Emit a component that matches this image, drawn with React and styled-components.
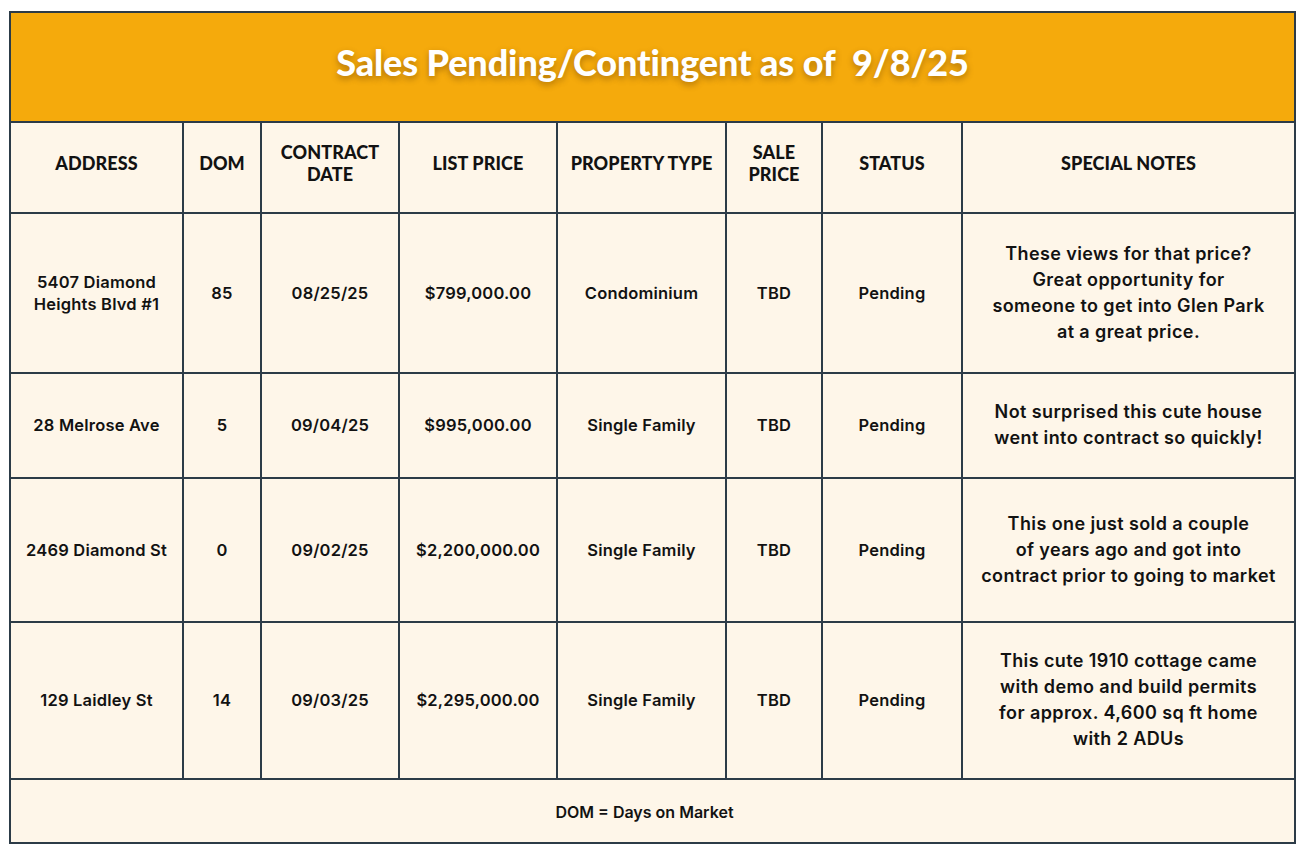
import React from "react";
import styled, { createGlobalStyle } from "styled-components";

const Global = createGlobalStyle`
  html, body { margin: 0; padding: 0; background: #ffffff; }
  body { font-family: "Lato", "Liberation Sans", sans-serif; }
`;

const Page = styled.div`
  padding: 11px 0 0 9px;
`;

const Sheet = styled.div`
  width: 1287px;
  box-sizing: border-box;
  display: grid;
  grid-template-columns: 171px 76px 136px 156px 167px 94px 138px 331px;
  grid-template-rows: 108px 89px 158px 103px 142px 155px 62px;
  gap: 2px;
  padding: 2px;
  background: #2c3b47;
`;

const TitleCell = styled.div`
  grid-column: 1 / -1;
  background: #f5aa0c;
  display: flex;
  align-items: center;
  justify-content: center;
  padding-bottom: 10px;
  box-sizing: border-box;
`;

const Title = styled.h1`
  margin: 0;
  font-family: "Lato", sans-serif;
  font-weight: 900;
  font-size: 36px;
  color: #ffffff;
  letter-spacing: -0.1px;
  white-space: pre;
  text-shadow: 0 3px 6px rgba(90, 50, 0, 0.45);
`;

const Cell = styled.div`
  background: #fef6e9;
  display: flex;
  align-items: center;
  justify-content: center;
  text-align: center;
  color: #121212;
  box-sizing: border-box;
  padding: 0 4px;
`;

const HeadCell = styled(Cell)`
  font-family: "Lato", sans-serif;
  font-weight: 900;
  font-size: 18px;
  line-height: 22px;
  letter-spacing: 0.1px;
  text-transform: uppercase;
  padding-bottom: 10px;
`;

const DataCell = styled(Cell)`
  font-family: "Inter", "Open Sans", sans-serif;
  font-weight: 600;
  font-size: ${(p) => (p.$note ? "18px" : "16.5px")};
  line-height: ${(p) => (p.$note ? "26px" : "22px")};
  letter-spacing: ${(p) => (p.$note ? "0.4px" : "0.2px")};
  padding-bottom: 1px;
`;

const FooterCell = styled(Cell)`
  grid-column: 1 / -1;
  font-family: "Inter", sans-serif;
  font-weight: 600;
  font-size: 16px;
  letter-spacing: 0px;
  padding: 2px 16px 0 0;
`;

const headers = [
  "Address",
  "DOM",
  <>Contract<br />Date</>,
  "List Price",
  "Property Type",
  <>Sale<br />Price</>,
  "Status",
  "Special Notes",
];

const rows = [
  [
    <>5407 Diamond<br />Heights Blvd #1</>,
    "85",
    "08/25/25",
    "$799,000.00",
    "Condominium",
    "TBD",
    "Pending",
    <>These views for that price?<br />Great opportunity for<br />someone to get into Glen Park<br />at a great price.</>,
  ],
  [
    "28 Melrose Ave",
    "5",
    "09/04/25",
    "$995,000.00",
    "Single Family",
    "TBD",
    "Pending",
    <>Not surprised this cute house<br />went into contract so quickly!</>,
  ],
  [
    "2469 Diamond St",
    "0",
    "09/02/25",
    "$2,200,000.00",
    "Single Family",
    "TBD",
    "Pending",
    <>This one just sold a couple<br />of years ago and got into<br />contract prior to going to market</>,
  ],
  [
    "129 Laidley St",
    "14",
    "09/03/25",
    "$2,295,000.00",
    "Single Family",
    "TBD",
    "Pending",
    <>This cute 1910 cottage came<br />with demo and build permits<br />for approx. 4,600 sq ft home<br />with 2 ADUs</>,
  ],
];

export default function App() {
  return (
    <Page>
      <Global />
      <Sheet>
        <TitleCell>
          <Title>{"Sales Pending/Contingent as of  9/8/25"}</Title>
        </TitleCell>
        {headers.map((h, i) => (
          <HeadCell key={i}>{h}</HeadCell>
        ))}
        {rows.map((r, ri) =>
          r.map((c, ci) => (
            <DataCell key={`${ri}-${ci}`} $note={ci === 7}>
              {c}
            </DataCell>
          ))
        )}
        <FooterCell>DOM = Days on Market</FooterCell>
      </Sheet>
    </Page>
  );
}
